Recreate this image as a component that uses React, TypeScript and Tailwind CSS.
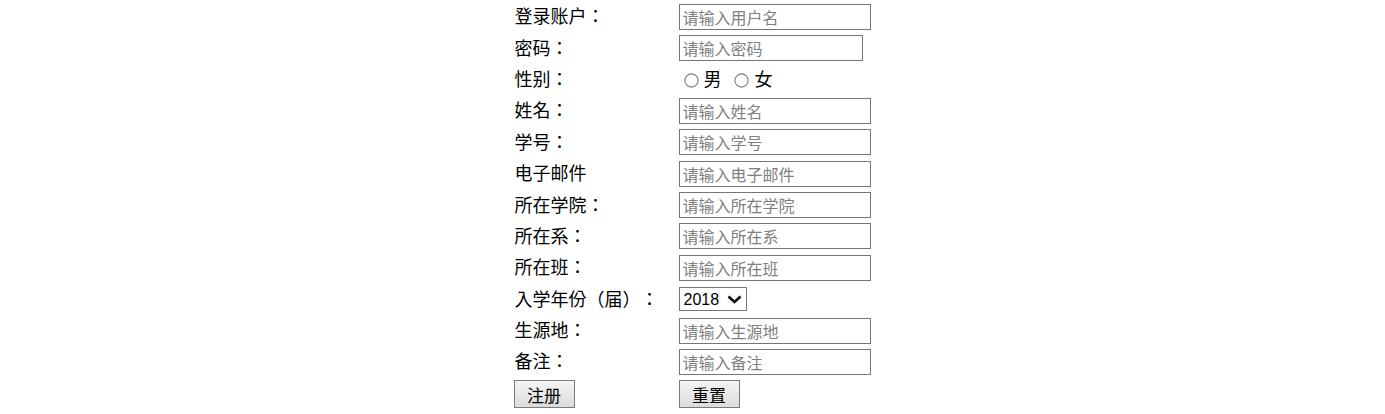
import React from "react";

type Field = {
	label: string;
	placeholder: string;
	width?: string;
};

const labelFont = { fontFamily: '"Liberation Serif", "Noto Sans CJK JP", serif' };

const RadioCircle: React.FC<{ className?: string }> = ({ className }) => (
	<svg className={`shrink-0 ${className ?? ""}`} width="15" height="15" viewBox="0 0 15 15">
		<circle cx="7.5" cy="7.5" r="6.6" fill="white" stroke="#7c7c7c" strokeWidth="1.1" />
	</svg>
);

const RegisterForm: React.FC = () => {
	const top: Field[] = [
		{ label: "登录账户：", placeholder: "请输入用户名" },
		{ label: "密码：", placeholder: "请输入密码", width: "w-[184px]" },
	];
	const middle: Field[] = [
		{ label: "姓名：", placeholder: "请输入姓名" },
		{ label: "学号：", placeholder: "请输入学号" },
		{ label: "电子邮件", placeholder: "请输入电子邮件" },
		{ label: "所在学院：", placeholder: "请输入所在学院" },
		{ label: "所在系：", placeholder: "请输入所在系" },
		{ label: "所在班：", placeholder: "请输入所在班" },
	];
	const bottom: Field[] = [
		{ label: "生源地：", placeholder: "请输入生源地" },
		{ label: "备注：", placeholder: "请输入备注" },
	];

	const renderInput = (f: Field) => (
		<div key={f.label} className="flex items-center h-[31.4px]">
			<span className="w-[164px] text-[18px] text-black pt-[2px] [text-spacing-trim:space-all]">
				{f.label}
			</span>
			<input
				type="text"
				placeholder={f.placeholder}
				className={`${f.width ?? "w-[192px]"} h-[26px] border border-[#767676] px-[3px] text-[16px] text-black placeholder:text-[#808080] font-['Noto_Sans_CJK_SC',sans-serif] outline-none`}
			/>
		</div>
	);

	return (
		<div className="w-[356px] mx-auto pt-[1px]" style={labelFont}>
			{top.map(renderInput)}

			{/* 性别 */}
			<div className="flex items-center h-[31.4px]">
				<span className="w-[164px] text-[18px] text-black pt-[2px] [text-spacing-trim:space-all]">性别：</span>
				<div className="flex items-center text-[18px] text-black pt-[2px]">
					<RadioCircle className="ml-[5px] mr-[5px]" />
					<span className="w-[18px]">男</span>
					<RadioCircle className="ml-[12px] mr-[6px]" />
					<span>女</span>
				</div>
			</div>

			{middle.map(renderInput)}

			{/* 入学年份 */}
			<div className="flex items-center h-[31.4px]">
				<span className="w-[164px] text-[18px] text-black pt-[2px] [text-spacing-trim:space-all]">入学年份（届）：</span>
				<div className="relative w-[68px] h-[24px]">
					<select
						defaultValue="2018"
						className="appearance-none w-full h-full border border-[#767676] bg-white text-[16px] text-black pl-[4px] font-['Liberation_Sans',sans-serif] outline-none"
					>
						<option>2016</option>
						<option>2017</option>
						<option>2018</option>
						<option>2019</option>
					</select>
					<svg
						className="absolute right-[5px] top-[8px] pointer-events-none"
						width="15"
						height="9"
						viewBox="0 0 15 9"
					>
						<path d="M1.5 1.5 L7.5 7 L13.5 1.5" fill="none" stroke="#111" strokeWidth="2.6" />
					</svg>
				</div>
			</div>

			{bottom.map(renderInput)}

			{/* 按钮 */}
			<div className="flex items-center h-[31.4px] pt-[2px]">
				<div className="w-[164px]">
					<button className="w-[61px] h-[28px] -ml-[1px] border border-[#7a7a7a] bg-gradient-to-b from-[#f4f4f4] to-[#dcdcdc] text-[17px] text-black font-['Noto_Sans_CJK_SC',sans-serif]">
						注册
					</button>
				</div>
				<button className="w-[61px] h-[28px] border border-[#7a7a7a] bg-gradient-to-b from-[#f4f4f4] to-[#dcdcdc] text-[17px] text-black font-['Noto_Sans_CJK_SC',sans-serif]">
					重置
				</button>
			</div>
		</div>
	);
};

export default function App() {
	return (
		<div className="w-full h-[414px] bg-white overflow-hidden">
			<RegisterForm />
		</div>
	);
}
